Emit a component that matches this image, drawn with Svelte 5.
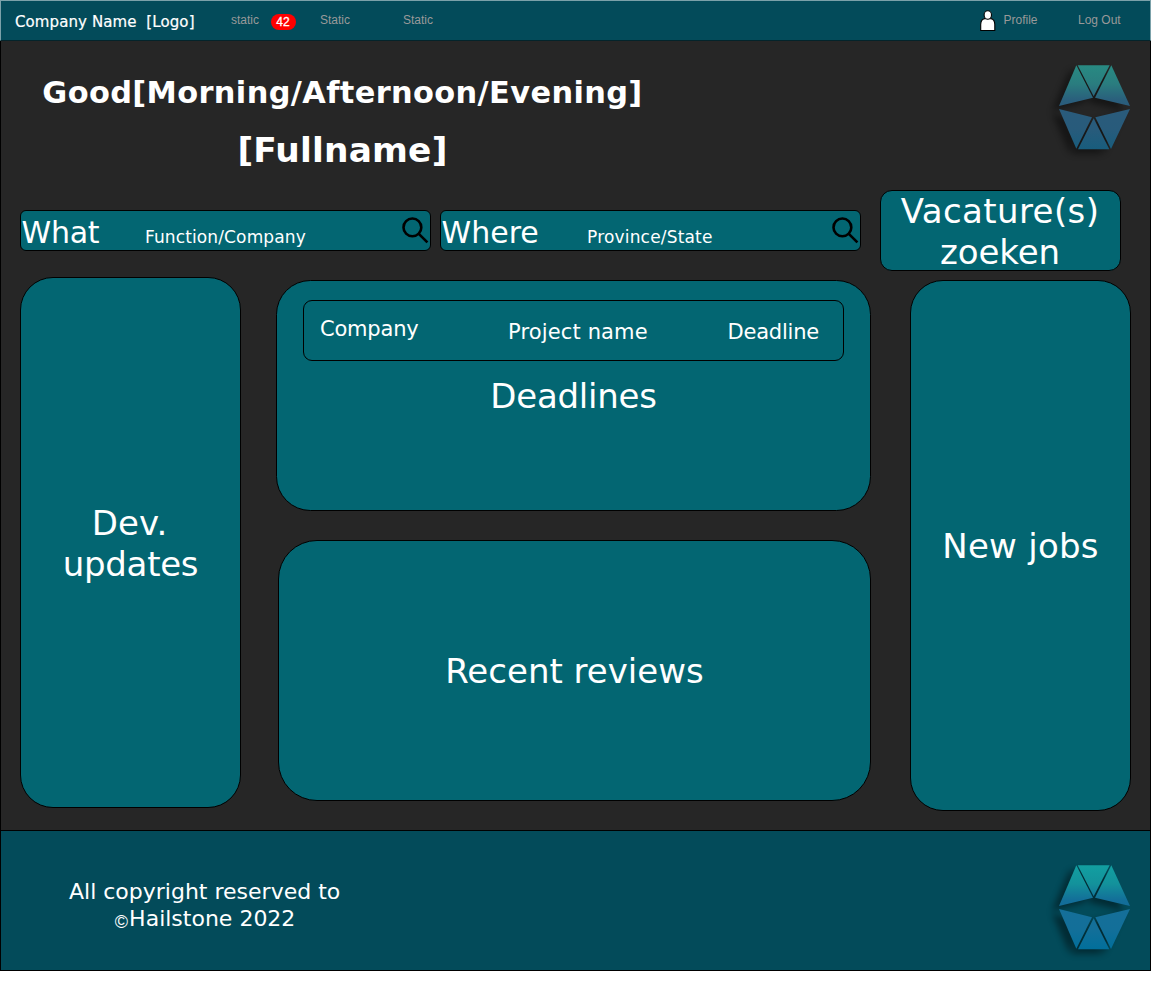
<script>
  const shards = [
    { half: 'top', points: '109,46 159,143 57,168' },
    { half: 'top', points: '113,46 209,46 161,139' },
    { half: 'top', points: '214,46 270,168 165,143' },
    { half: 'bottom', points: '57,177 156,202 109,296' },
    { half: 'bottom', points: '161,205 208,298 114,298' },
    { half: 'bottom', points: '270,177 166,202 213,297' }
  ];
</script>

{#snippet logo(id, muted)}
  <svg class="logo" viewBox="0 0 330 345" aria-hidden="true">
    <defs>
      <linearGradient id="{id}-top" gradientUnits="userSpaceOnUse" x1="0" y1="46" x2="0" y2="168">
        <stop offset="0" stop-color={muted ? '#288a82' : '#129fa1'} />
        <stop offset="0.45" stop-color={muted ? '#2a7d7f' : '#13929b'} />
        <stop offset="0.85" stop-color={muted ? '#2a5f7c' : '#136f99'} />
        <stop offset="1" stop-color={muted ? '#2a5b7b' : '#136c98'} />
      </linearGradient>
      <linearGradient id="{id}-bottom" gradientUnits="userSpaceOnUse" x1="0" y1="177" x2="0" y2="298">
        <stop offset="0" stop-color={muted ? '#2a5b7b' : '#156f99'} />
        <stop offset="0.5" stop-color={muted ? '#285b7b' : '#136f99'} />
        <stop offset="1" stop-color={muted ? '#185d7d' : '#016f9b'} />
      </linearGradient>
      <filter id="{id}-blur" x="-30%" y="-30%" width="160%" height="160%">
        <feGaussianBlur stdDeviation="9" />
      </filter>
    </defs>
    <g class="shadow" filter="url(#{id}-blur)" transform="translate(-21 14)">
      {#each shards as s}
        <polygon points={s.points} />
      {/each}
    </g>
    {#each shards as s}
      <polygon points={s.points} fill="url(#{id}-{s.half})" />
    {/each}
  </svg>
{/snippet}

{#snippet magnifier()}
  <svg class="magnifier" viewBox="0 0 28 28" aria-hidden="true">
    <circle cx="10.4" cy="10.4" r="8.9" />
    <path d="M16.8 16.8 L25.4 25.4" />
  </svg>
{/snippet}

<div class="page">
  <header>
    <span class="brand">Company Name&nbsp; [Logo]</span>
    <nav>
      <a class="first">static</a>
      <span class="badge">42</span>
      <a class="second">Static</a>
      <a class="third">Static</a>
    </nav>
    <div class="account">
      <svg class="person" viewBox="0 0 17 22" aria-hidden="true">
        <path d="M0.7 20.5 V14.5 Q0.9 9.2 4.6 8.6 H11 Q14.6 9.2 14.8 14.5 V20.5 Z" />
        <ellipse cx="7.8" cy="5" rx="3.7" ry="4.2" />
      </svg>
      <a class="profile">Profile</a>
      <a class="logout">Log Out</a>
    </div>
  </header>

  <main>
    <section class="hero">
      <h1>
        <span class="greeting">Good[Morning/Afternoon/Evening]</span>
        <span class="fullname">[Fullname]</span>
      </h1>
      {@render logo('hero', true)}
    </section>

    <section class="search">
      <div class="field what">
        <span class="label">What</span>
        <span class="hint">Function/Company</span>
        {@render magnifier()}
      </div>
      <div class="field where">
        <span class="label">Where</span>
        <span class="hint">Province/State</span>
        {@render magnifier()}
      </div>
      <div class="submit"><span class="vac">Vacature(s)</span><span>zoeken</span></div>
    </section>

    <section class="board">
      <div class="panel updates"><span class="dev">Dev.</span><span class="upd">updates</span></div>
      <div class="middle">
        <div class="panel deadlines">
          <div class="columns">
            <span class="c1">Company</span>
            <span class="c2">Project name</span>
            <span class="c3">Deadline</span>
          </div>
          <span class="title">Deadlines</span>
        </div>
        <div class="panel reviews"><span>Recent reviews</span></div>
      </div>
      <div class="panel jobs"><span>New jobs</span></div>
    </section>
  </main>

  <footer>
    <p><span class="line1">All copyright reserved to</span><span class="line2"><span class="copy">©</span>Hailstone 2022</span></p>
    {@render logo('foot', false)}
  </footer>
</div>

<style>
  :global(body) {
    margin: 0;
    background: #fff;
  }
  .page,
  .page * {
    box-sizing: border-box;
  }
  .page {
    width: 1151px;
    height: 971px;
    color: #fff;
    font-family: 'DejaVu Sans', Verdana, sans-serif;
    line-height: 1.2;
    white-space: nowrap;
  }
  header {
    display: flex;
    align-items: flex-start;
    height: 41px;
    background: #034b5a;
    border: 1px solid #7ba1a9;
    border-bottom-color: #04242b;
  }
  .brand {
    width: 217px;
    padding: 12px 0 0 14px;
    font-size: 15px;
    letter-spacing: 0.1px;
    -webkit-text-stroke: 0.2px #fff;
  }
  nav,
  .account {
    display: flex;
    align-items: flex-start;
    color: #999;
    font: 12px/14px 'Liberation Sans', Arial, sans-serif;
  }
  nav {
    flex: 1;
    padding-left: 13px;
  }
  nav a,
  .account a {
    padding-top: 12px;
  }
  .first {
    width: 39.5px;
  }
  .badge {
    width: 25px;
    height: 16px;
    margin: 13px 24.5px 0 0;
    border-radius: 8px;
    background: #f00;
    color: #fff;
    line-height: 16px;
    text-align: center;
    -webkit-text-stroke: 0.3px #fff;
  }
  .second {
    width: 83px;
  }
  .person {
    width: 17px;
    height: 22px;
    margin: 9px 7px 0 0;
    fill: #fff;
    stroke: #000;
    stroke-width: 1.1;
  }
  .profile {
    width: 74.5px;
  }
  .logout {
    width: 72px;
  }
  main {
    height: 789px;
    background: #262626;
    border: solid #000;
    border-width: 0 1px;
  }
  .hero {
    display: flex;
    justify-content: space-between;
    height: 149px;
    padding-left: 40.5px;
  }
  h1 {
    display: flex;
    flex-direction: column;
    align-items: center;
    width: 602px;
    margin: 0;
    padding-top: 34px;
    font-weight: bold;
  }
  .greeting {
    font-size: 30.4px;
    line-height: 36px;
    letter-spacing: 0.38px;
  }
  .fullname {
    margin-top: 19px;
    font-size: 34.4px;
    line-height: 40px;
    letter-spacing: 0.2px;
  }
  .logo {
    flex: none;
    width: 110px;
    height: 115px;
    margin-top: 9px;
  }
  .shadow {
    opacity: 0.42;
  }
  .search {
    display: flex;
    height: 81px;
    padding-left: 19px;
  }
  .field {
    display: flex;
    height: 41px;
    margin: 20px 9px 0 0;
    background: #036672;
    border: 1px solid #000;
    border-radius: 6px;
  }
  .what {
    width: 411px;
  }
  .where {
    width: 421px;
    margin-right: 19px;
  }
  .label {
    flex: none;
    padding-left: 0.5px;
    font-size: 30px;
    line-height: 44px;
  }
  .what .label {
    width: 124px;
    letter-spacing: -0.25px;
  }
  .where .label {
    width: 146px;
  }
  .hint {
    flex: 1;
    font-size: 17px;
    line-height: 52px;
    letter-spacing: 0.12px;
  }
  .where .hint {
    letter-spacing: 0.18px;
  }
  .magnifier {
    width: 28px;
    height: 28px;
    margin: 6px 0 0 0;
    fill: none;
    stroke: #000;
    stroke-width: 2.6;
  }
  .submit {
    display: flex;
    flex-direction: column;
    align-items: center;
    gap: 1px;
    width: 241px;
    height: 81px;
    padding-right: 1px;
    background: #036672;
    border: 1px solid #000;
    border-radius: 12px;
    font-size: 34px;
    line-height: 40px;
    letter-spacing: -0.1px;
  }
  .vac {
    letter-spacing: 0.4px;
  }
  .board {
    display: flex;
    align-items: flex-start;
    padding: 6px 19px 0;
  }
  .panel {
    display: flex;
    flex-direction: column;
    align-items: center;
    justify-content: center;
    gap: 1px;
    padding-top: 1px;
    background: #036672;
    border: 1px solid #000;
    border-radius: 33px;
    font-size: 34px;
    line-height: 40px;
  }
  .updates,
  .jobs {
    width: 221px;
    height: 531px;
  }
  .updates {
    padding-top: 2px;
  }
  .dev {
    margin-right: 2px;
  }
  .upd {
    letter-spacing: -0.3px;
  }
  .middle {
    display: flex;
    flex-direction: column;
    align-items: flex-end;
    gap: 29px;
    width: 595px;
    margin: 3px 39px 0 35px;
  }
  .deadlines {
    justify-content: flex-start;
    width: 595px;
    height: 231px;
    padding: 19px 0 0;
    border-radius: 34.5px;
  }
  .columns {
    display: flex;
    width: 541px;
    height: 61px;
    margin-left: -1px;
    padding-left: 16.5px;
    border: 1px solid #000;
    border-radius: 9px;
    font-size: 21px;
    line-height: 26px;
  }
  .c1 {
    width: 188px;
    padding-top: 15px;
    letter-spacing: -0.2px;
  }
  .c2 {
    width: 219.5px;
    padding-top: 18px;
    letter-spacing: 0.14px;
  }
  .c3 {
    padding-top: 18px;
    letter-spacing: -0.2px;
  }
  .title {
    margin-top: 14px;
    letter-spacing: -0.25px;
  }
  .reviews {
    width: 593px;
    height: 261px;
    border-radius: 39px;
  }
  .jobs {
    margin-top: 3px;
    letter-spacing: 0.25px;
  }
  footer {
    display: flex;
    justify-content: space-between;
    height: 141px;
    background: #034b5a;
    border: 1px solid #000;
  }
  p {
    display: flex;
    flex-direction: column;
    align-items: center;
    margin: 0;
    padding: 47px 0 0 68px;
    font-size: 22px;
    line-height: 27px;
  }
  .line2 {
    padding-left: 1px;
  }
  .copy {
    margin-right: 1px;
    font: 18px/10px 'Liberation Sans', Arial, sans-serif;
    vertical-align: -2px;
  }
  footer .logo {
    margin-top: 19px;
  }
</style>
